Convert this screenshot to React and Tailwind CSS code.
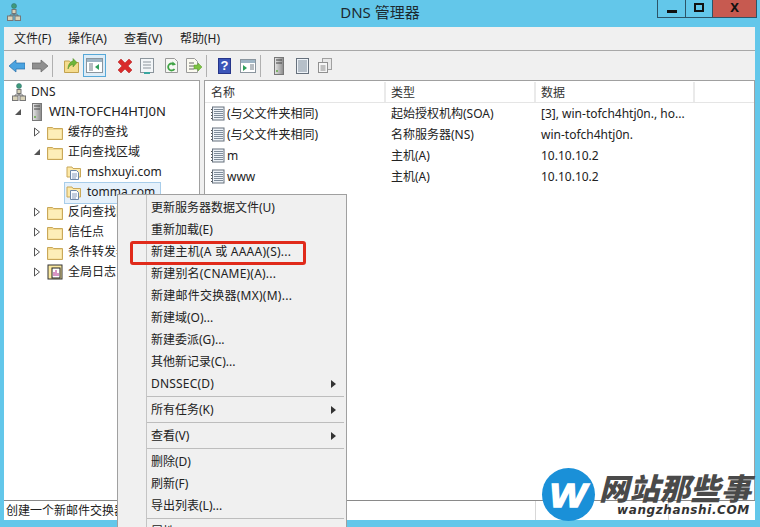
const Folder = ({ cls = "w-4 h-[15px]" }) => (
  <svg viewBox="0 0 16 15" className={cls}>
    <path d="M0.500 2.500h5l1.200 1H15.500v11H0.500z" fill="#f3d98f" stroke="#c9a85a" strokeWidth="1" />
    <path d="M1.500 5h13v8.500h-13z" fill="#fdeeb8" />
  </svg>
);
const Zone = () => (
  <svg viewBox="0 0 16 16" className="w-4 h-4">
    <path d="M1 3h5l1 1.500h7.500V13H1z" fill="#fde9a8" stroke="#c9a85a" />
    <path d="M4.500 6.500h6l2 2v7h-8z" fill="#f8fbff" stroke="#6d87a8" />
    <path d="M6 10h5M6 12h5M6 14h4" stroke="#6d87a8" strokeWidth="0.8" />
  </svg>
);
const Rec = () => (
  <svg viewBox="0 0 14 15" className="w-[14px] h-[15px]">
    <rect x="1.500" y="1" width="11.500" height="13" fill="#eef3f8" stroke="#66707c" />
    <path d="M3 3.500h9M3 5.500h9M3 7.500h9M3 9.500h9M3 11.500h9" stroke="#7f8c9a" />
    <path d="M0.500 3v1M0.500 6v1M0.500 9v1M0.500 12v1" stroke="#555" />
  </svg>
);
const Server = ({ cls = "w-[10px] h-[18px]" }) => (
  <svg viewBox="0 0 10 18" className={cls}>
    <defs>
      <linearGradient id="srv" x1="0" x2="1"><stop offset="0" stopColor="#e8e8e8" /><stop offset="1" stopColor="#8a8a8a" /></linearGradient>
    </defs>
    <rect x="0.500" y="0.500" width="9" height="17" fill="url(#srv)" stroke="#777" />
    <path d="M2 3h6M2 6h6" stroke="#444" />
    <rect x="2" y="13" width="2" height="2" fill="#7fb36a" />
  </svg>
);
const DnsIcon = () => (
  <svg viewBox="0 0 14 18" className="w-[14px] h-[18px]">
    <circle cx="7" cy="3" r="2.500" fill="#3f9a7a" stroke="#2f6f70" strokeWidth="0.5" />
    <rect x="5" y="6.500" width="4" height="4" fill="#d8d2b8" stroke="#777" />
    <path d="M7 10.500v2M3 13v-1h8v1" stroke="#666" fill="none" />
    <rect x="0.500" y="13" width="5.500" height="4.500" fill="#d8d2b8" stroke="#777" />
    <rect x="8" y="13" width="5.500" height="4.500" fill="#d8d2b8" stroke="#777" />
  </svg>
);
const Open = () => (
  <svg viewBox="0 0 8 10" className="w-2 h-[10px]"><path d="M1.500 1l5 4-5 4z" fill="#fff" stroke="#555" /></svg>
);
const Down = () => (
  <svg viewBox="0 0 8 8" className="w-2 h-2"><path d="M7 1v6H1z" fill="#555" /></svg>
);

const Row = ({ pad, arrow, icon, gap = "ml-[5px]", text = "", root = false, arrowGap = "mr-[6px]" }) => (
  <div className="h-5 flex items-center whitespace-nowrap" style={{ paddingLeft: pad }}>
    {!root && <span className={`w-2 flex justify-center ${arrowGap}`}>{arrow}</span>}
    {icon}
    <span className={gap}>{text}</span>
  </div>
);

const Sep = () => <div className="w-px h-[22px] bg-[#b0b0b0] mx-[4px]" />;

const Toolbar = () => (
  <div className="h-[29px] flex items-center pl-[5px] bg-[#f0f0f0]">
    <svg viewBox="0 0 16 14" className="w-4 h-[14px]"><path d="M0 7l7-6v3h9v6H7v3z" fill="#4aa3e0" stroke="#2a6fa8" strokeWidth="0.7" /></svg>
    <svg viewBox="0 0 16 14" className="w-4 h-[14px] ml-[7px]"><path d="M16 7L9 1v3H0v6h9v3z" fill="#8f8f8f" stroke="#666" strokeWidth="0.7" /></svg>
    <Sep />
    <svg viewBox="0 0 15 15" className="w-[15px] h-[15px] ml-[7px]">
      <path d="M0.500 3h5l1 1.500h8v10h-14z" fill="#f5dc8e" stroke="#c2a24e" />
      <path d="M4 11c1-3 3-4 5-4.500V9l4-4.500L9 0.500V3C6 3.500 4 7 4 11z" fill="#6fb53a" stroke="#4c8a22" strokeWidth="0.5" />
    </svg>
    <div className="ml-[4px] w-[23px] h-[23px] border border-[#56a8d8] bg-[#dcecf7] flex items-center justify-center">
      <svg viewBox="0 0 17 15" className="w-[17px] h-[15px]">
        <rect x="0.500" y="0.500" width="16" height="14" fill="#fff" stroke="#8a959e" />
        <rect x="1" y="1" width="15" height="3" fill="#9db4c4" />
        <path d="M3 6h4M3 8h4M3 10h4M3 12h4" stroke="#6f7a84" />
        <path d="M13 6v6l-4-3z" fill="#2f9e5a" />
      </svg>
    </div>
    <svg viewBox="0 0 16 16" className="w-4 h-4 ml-[11px]"><path d="M1 4l3-3 4 4 4-4 3 3-4 4 4 4-3 3-4-4-4 4-3-3 4-4z" fill="#d92b2b" stroke="#b01a1a" strokeWidth="0.5" /></svg>
    <svg viewBox="0 0 14 16" className="w-[14px] h-4 ml-[7px]">
      <rect x="0.500" y="0.500" width="13" height="14" fill="#f3f6f8" stroke="#8c959c" />
      <path d="M3 4h8M3 7h8M3 10h8" stroke="#8c959c" />
      <rect x="4" y="14" width="6" height="2" fill="#3aa6a0" />
    </svg>
    <svg viewBox="0 0 13 15" className="w-[13px] h-[15px] ml-[11px]">
      <path d="M0.500 0.500h9l3 3v11h-12z" fill="#f6f7f3" stroke="#9a9a9a" />
      <path d="M9.500 7A3.500 3.500 0 1 0 9.500 11" fill="none" stroke="#3fa344" strokeWidth="1.800" />
      <path d="M7.500 3.500l3.500 3-4 1z" fill="#3fa344" />
    </svg>
    <svg viewBox="0 0 16 15" className="w-4 h-[15px] ml-[8px]">
      <path d="M0.500 0.500h8l3 3v11h-11z" fill="#fbfaf0" stroke="#9a9a9a" />
      <path d="M3 5h5M3 8h5M3 11h5" stroke="#666" />
      <path d="M8 7h4V5l4 4-4 4v-2H8z" fill="#7cc242" stroke="#5a9a2a" strokeWidth="0.5" />
    </svg>
    <Sep />
    <div className="ml-[7px] w-[13px] h-[16px] bg-[#3b55b8] border border-[#26358a] text-white text-[13px] leading-[14px] font-bold text-center" style={{ fontFamily: '"Liberation Sans", sans-serif' }}>?</div>
    <svg viewBox="0 0 16 14" className="w-4 h-[14px] ml-[9px]">
      <rect x="0.500" y="0.500" width="15" height="13" fill="#fff" stroke="#8a959e" />
      <rect x="1" y="1" width="14" height="3" fill="#9db4c4" />
      <path d="M3 6v6l4-3z" fill="#2f9e5a" />
      <path d="M10 6h4M10 8h4M10 10h4" stroke="#6f7a84" />
    </svg>
    <Sep />
    <Server cls="w-[10px] h-[18px] ml-[9px]" />
    <svg viewBox="0 0 14 16" className="w-[14px] h-4 ml-[11px]">
      <rect x="1.500" y="0.500" width="12" height="15" fill="#eef3f8" stroke="#66707c" />
      <path d="M3 3h9M3 5h9M3 7h9M3 9h9M3 11h9M3 13h9" stroke="#7f8c9a" />
    </svg>
    <svg viewBox="0 0 14 15" className="w-[14px] h-[15px] ml-[9px]">
      <rect x="4.500" y="0.500" width="9" height="11" fill="#e8e8e8" stroke="#a0a0a0" />
      <rect x="0.500" y="4.500" width="9" height="10" fill="#f6f6f6" stroke="#909090" />
      <path d="M2.500 8h5M2.500 10h5M2.500 12h5" stroke="#888" />
    </svg>
  </div>
);

const records = [
  ["(与父文件夹相同)", "起始授权机构(SOA)", "[3], win-tofch4htj0n., ho..."],
  ["(与父文件夹相同)", "名称服务器(NS)", "win-tofch4htj0n."],
  ["m", "主机(A)", "10.10.10.2"],
  ["www", "主机(A)", "10.10.10.2"],
];

const Item = ({ text, sub, track = "" }) => (
  <div className="h-[22px] flex items-center pl-[33px] pr-[10px] justify-between whitespace-nowrap">
    <span className={track}>{text}</span>
    {sub && <svg viewBox="0 0 5 8" className="w-[5px] h-2"><path d="M0 0l5 4-5 4z" fill="#333" /></svg>}
  </div>
);
const MenuSep = () => <div className="h-px bg-[#bdbdbd] ml-[29px] mr-[2px] mt-[1px] mb-[2px]" />;

const ContextMenu = () => (
  <div className="absolute left-[117px] top-[194px] w-[230px] h-[340px] bg-[#f0f0f0] border border-[#a0a0a0] pt-[2px]">
    <div className="absolute left-[28px] top-0 bottom-0 w-px bg-[#c4c4c4]" />
    <Item text="更新服务器数据文件(U)" />
    <Item text="重新加载(E)" />
    <Item text="新建主机(A 或 AAAA)(S)..." track="tracking-[0.25px]" />
    <Item text="新建别名(CNAME)(A)..." track="tracking-[0.2px]" />
    <Item text="新建邮件交换器(MX)(M)..." track="tracking-[0.25px]" />
    <Item text="新建域(O)..." />
    <Item text="新建委派(G)..." />
    <Item text="其他新记录(C)..." />
    <Item text="DNSSEC(D)" sub track="tracking-[0.2px]" />
    <MenuSep />
    <Item text="所有任务(K)" sub />
    <MenuSep />
    <Item text="查看(V)" sub />
    <MenuSep />
    <Item text="删除(D)" />
    <Item text="刷新(F)" />
    <Item text="导出列表(L)..." />
    <MenuSep />
    <Item text="属性(R)" />
  </div>
);

export default function App() {
  return (
    <div
      className="relative w-[760px] h-[527px] overflow-hidden bg-[#63c7ea] text-[12px] text-[#222] flex flex-col"
      style={{ fontFamily: '"Noto Sans", "Noto Sans CJK SC", sans-serif' }}
    >
      <div className="relative h-[27px] shrink-0 flex items-center justify-center">
        <div className="absolute left-[7px] top-[3px]"><DnsIcon /></div>
        <span className="text-[15px] text-[#1c2a30] -mt-[3px]">DNS 管理器</span>
        <div className="absolute top-0 left-[657px] flex h-[18px]">
          <div className="w-[28px] border-l border-b border-[#2c5468] flex items-end justify-center pb-[4px]"><div className="w-[10px] h-[3px] bg-[#111]" /></div>
          <div className="w-[27px] border-l border-b border-[#2c5468] flex items-start justify-center pt-[3px]"><div className="w-[10px] h-[9px] border-2 border-[#111]" /></div>
          <div className="w-[45px] bg-[#c75a50] border-l border-r border-b border-[#2c5468] flex items-center justify-center text-[13px] font-bold text-[#111] leading-none pb-[2px]">X</div>
        </div>
      </div>
      <div className="ml-[4px] mr-[5px] flex-1 flex flex-col min-h-0 bg-[#f0f0f0]">
        <div className="h-[23px] flex items-center pl-[10px] border-b border-[#a8a8a8] box-content">
          <span className="w-[54px]">文件(F)</span>
          <span className="w-[56px]">操作(A)</span>
          <span className="w-[56px]">查看(V)</span>
          <span>帮助(H)</span>
        </div>
        <Toolbar />
        <div className="flex-1 flex min-h-0 gap-[4px]">
          <div className="w-[196px] bg-white border-t border-r border-[#a0a0a0] overflow-hidden pt-px">
            <Row root pad={8} icon={<DnsIcon />} text="DNS" />
            <Row pad={10} arrowGap="mr-[10px]" gap="ml-[7px]" arrow={<Down />} icon={<Server />} text={<span className="text-[13px]">WIN-TOFCH4HTJ0N</span>} />
            <Row pad={29} arrow={<Open />} icon={<Folder />} text="缓存的查找" />
            <Row pad={29} arrow={<Down />} icon={<Folder />} text="正向查找区域" />
            <Row pad={52} arrowGap="mr-[2px]" arrow={null} icon={<Zone />} text="mshxuyi.com" />
            <div className="relative">
              <div className="absolute left-[60px] top-0 w-[97px] h-[22px] bg-[#e6f1fb] border border-[#a8cdea]" />
              <div className="relative"><Row pad={52} arrowGap="mr-[2px]" arrow={null} icon={<Zone />} text="tomma.com" /></div>
            </div>
            <Row pad={29} arrow={<Open />} icon={<Folder />} text="反向查找区域" />
            <Row pad={29} arrow={<Open />} icon={<Folder />} text="信任点" />
            <Row pad={29} arrow={<Open />} icon={<Folder />} text="条件转发器" />
            <Row pad={29} arrow={<Open />} icon={
              <svg viewBox="0 0 16 16" className="w-4 h-4"><rect x="1" y="1" width="14" height="14" fill="#fbe9a0" stroke="#333" /><rect x="5" y="4" width="8" height="10" fill="#fff" stroke="#222" /><path d="M7 12V8M9 12V6M11 12V9" stroke="#b02a8a" /></svg>
            } text="全局日志" />
          </div>
          <div className="flex-1 bg-white border-t border-l border-r border-[#a0a0a0] min-w-0">
            <div className="flex h-[21px] mt-px border-b border-[#e5e5e5] text-[#333]">
              <div className="w-[181px] pl-[6px] pt-[2px] border-r-2 border-[#eaeaea] flex items-center">名称</div>
              <div className="w-[150px] pl-[5px] pt-[2px] border-r-2 border-[#eaeaea] flex items-center">类型</div>
              <div className="w-[159px] pl-[5px] pt-[2px] border-r-2 border-[#eaeaea] flex items-center">数据</div>
            </div>
            {records.map((r, i) => (
              <div key={i} className="flex h-[21px] items-center">
                <div className="w-[181px] pl-[6px] flex items-center gap-[2px]"><Rec /><span>{r[0]}</span></div>
                <div className="w-[150px] pl-[5px]">{r[1]}</div>
                <div className="w-[159px] pl-[5px] whitespace-nowrap">{r[2]}</div>
              </div>
            ))}
          </div>
        </div>
        <div className="h-[20px] shrink-0 bg-white border-t border-[#8a8a8a] flex items-center pl-[2px] whitespace-nowrap relative">
          创建一个新邮件交换器(MX)记录。
          <div className="absolute left-[531px] top-0 bottom-0 w-px bg-[#d8d8d8]" />
          <div className="absolute left-[664px] top-0 bottom-0 w-px bg-[#d8d8d8]" />
        </div>
      </div>
      <div className="h-[7px] shrink-0" />

      <ContextMenu />
      <div className="absolute left-[130px] top-[241px] w-[176px] h-[24px] border-[3px] border-[#e02a1a] rounded-[3px]" />

      <div className="absolute left-[542px] top-[468px] w-[53px] h-[53px] rounded-full bg-[#1a90d8] flex items-center justify-center text-white font-black italic" style={{ fontFamily: '"Liberation Sans", sans-serif' }}>
        <span className="text-[34px] leading-none scale-x-[1.15] [-webkit-text-stroke:1.5px_white]">W</span>
      </div>
      <div className="absolute left-[599px] top-[471px] text-[30px] leading-[36px] tracking-[0.5px] font-black italic text-[#4a4a4a] whitespace-nowrap">网站那些事</div>
      <div className="absolute left-[617px] top-[504px] text-[12px] leading-[13px] font-bold italic text-[#333] tracking-[0.6px] whitespace-nowrap" style={{ fontFamily: '"DejaVu Sans", sans-serif' }}>wangzhanshi.COM</div>
    </div>
  );
}
